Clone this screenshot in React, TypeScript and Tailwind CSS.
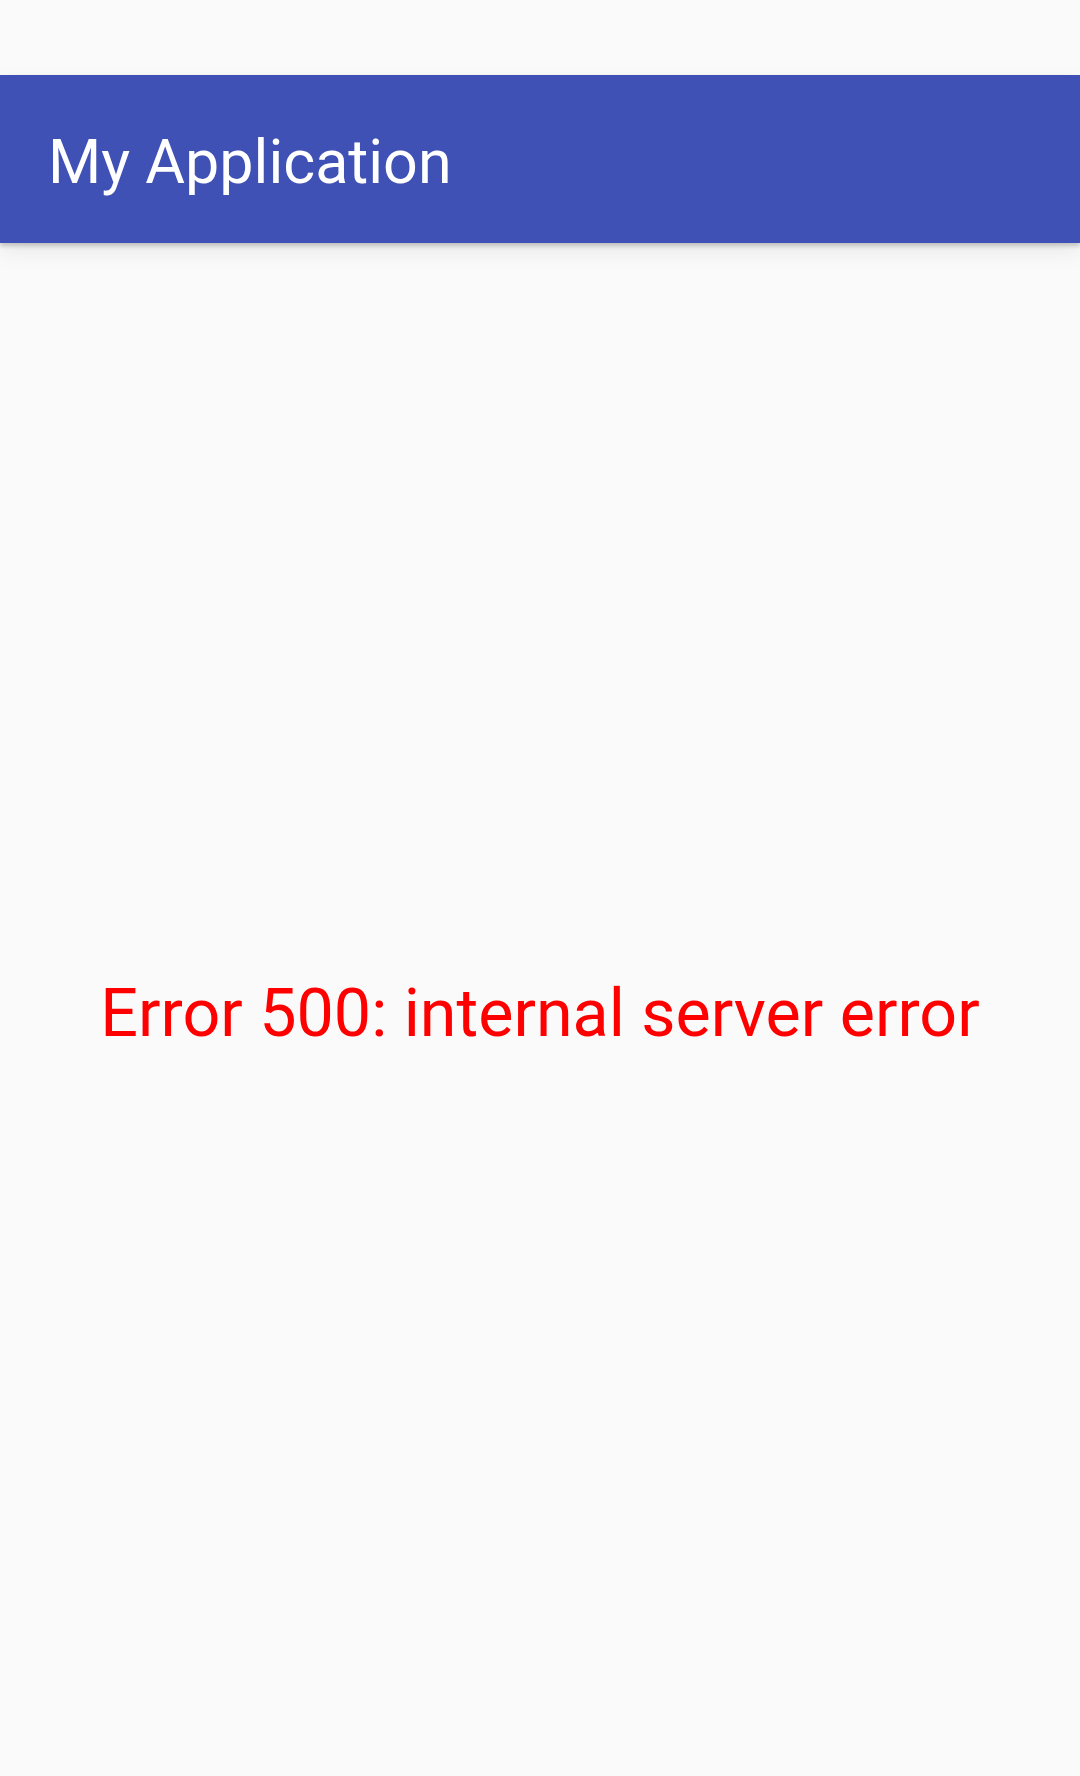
export default function App() {
  return (
    <div className="flex h-[1776px] w-[1080px] flex-col bg-[#fafafa] font-['Roboto',sans-serif]">
      {/* Status bar area */}
      <div className="h-[75px] shrink-0 bg-[#fafafa]" />

      {/* Toolbar */}
      <div className="relative z-10 flex h-[168px] shrink-0 items-center bg-[#3f51b5] px-[48px] pt-[6px] shadow-[0_3px_4px_rgba(0,0,0,0.18),0_8px_20px_rgba(0,0,0,0.08)]">
        <h1 className="text-[61px] font-normal leading-none text-white">My Application</h1>
      </div>

      {/* Content */}
      <div className="flex flex-1 items-center justify-center pt-[7px]">
        <p className="text-[66.4px] leading-none text-[#ff0000]">Error 500: internal server error</p>
      </div>
    </div>
  );
}
